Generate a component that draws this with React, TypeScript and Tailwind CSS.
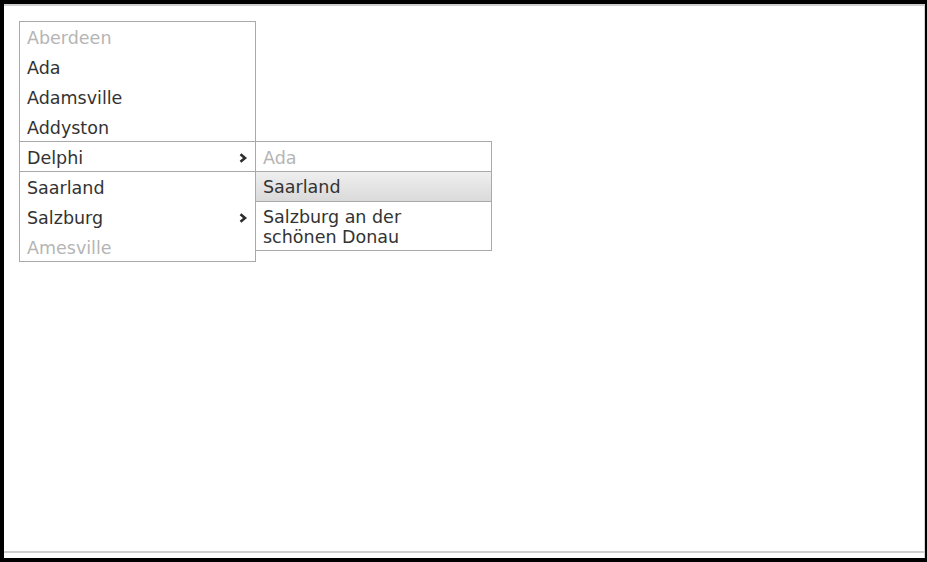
import React from "react";

type Item = {
  label: string;
  disabled?: boolean;
  sub?: boolean;
  open?: boolean;
};

const items: Item[] = [
  { label: "Aberdeen", disabled: true },
  { label: "Ada" },
  { label: "Adamsville" },
  { label: "Addyston" },
  { label: "Delphi", sub: true, open: true },
  { label: "Saarland" },
  { label: "Salzburg", sub: true },
  { label: "Amesville", disabled: true },
];

function Chevron() {
  return (
    <svg width="8" height="10" viewBox="0 0 8 10" className="shrink-0">
      <path d="M1.5 1.2 L6 5 L1.5 8.8" fill="none" stroke="#2e2e2e" strokeWidth="2.6" />
    </svg>
  );
}

function rowHeight(i: number) {
  if (i < 4) return "h-[29.75px]";
  if (i === 4) return "h-[31px] border-y border-[#a9a9a9]";
  return "h-[29.67px]";
}

export default function App() {
  return (
    <div className="w-[927px] h-[562px] bg-black pt-[4px] pl-[4px] pr-[2px] pb-[4px] font-['DejaVu_Sans',sans-serif]">
      <div className="h-full bg-white border-r border-[#d4d4d4] flex flex-col">
        <div className="h-[2px] bg-[#cfcfcf]" />
        <div className="flex-1 p-[15px]">
          <div className="relative w-[237px] border border-[#a9a9a9] bg-white text-[17.5px]">
            {items.map((it, i) => (
              <div
                key={it.label}
                className={`box-border flex items-center justify-between pl-[7px] pr-[8px] pt-[3px] ${rowHeight(i)} ${
                  it.disabled ? "text-[#b5b5b5]" : "text-[#333]"
                }`}
              >
                <span>{it.label}</span>
                {it.sub && <Chevron />}
              </div>
            ))}

            {/* flyout */}
            <div className="absolute left-[235px] top-[119px] w-[237px] border border-[#a9a9a9] bg-white">
              <div className="box-border h-[29px] flex items-center pl-[7px] pt-[3px] text-[#b5b5b5]">Ada</div>
              <div className="box-border h-[31px] flex items-center pl-[7px] pt-[2px] text-[#333] border-y border-[#a9a9a9] bg-gradient-to-b from-[#efefef] to-[#dadada]">
                Saarland
              </div>
              <div className="pt-[5px] pb-[3px] pl-[7px] text-[#333] leading-[20px]">
                Salzburg an der
                <br />
                schönen Donau
              </div>
            </div>
          </div>
        </div>
        <div className="h-[2px] bg-[#cfcfcf]" />
        <div className="h-[5px]" />
      </div>
    </div>
  );
}
